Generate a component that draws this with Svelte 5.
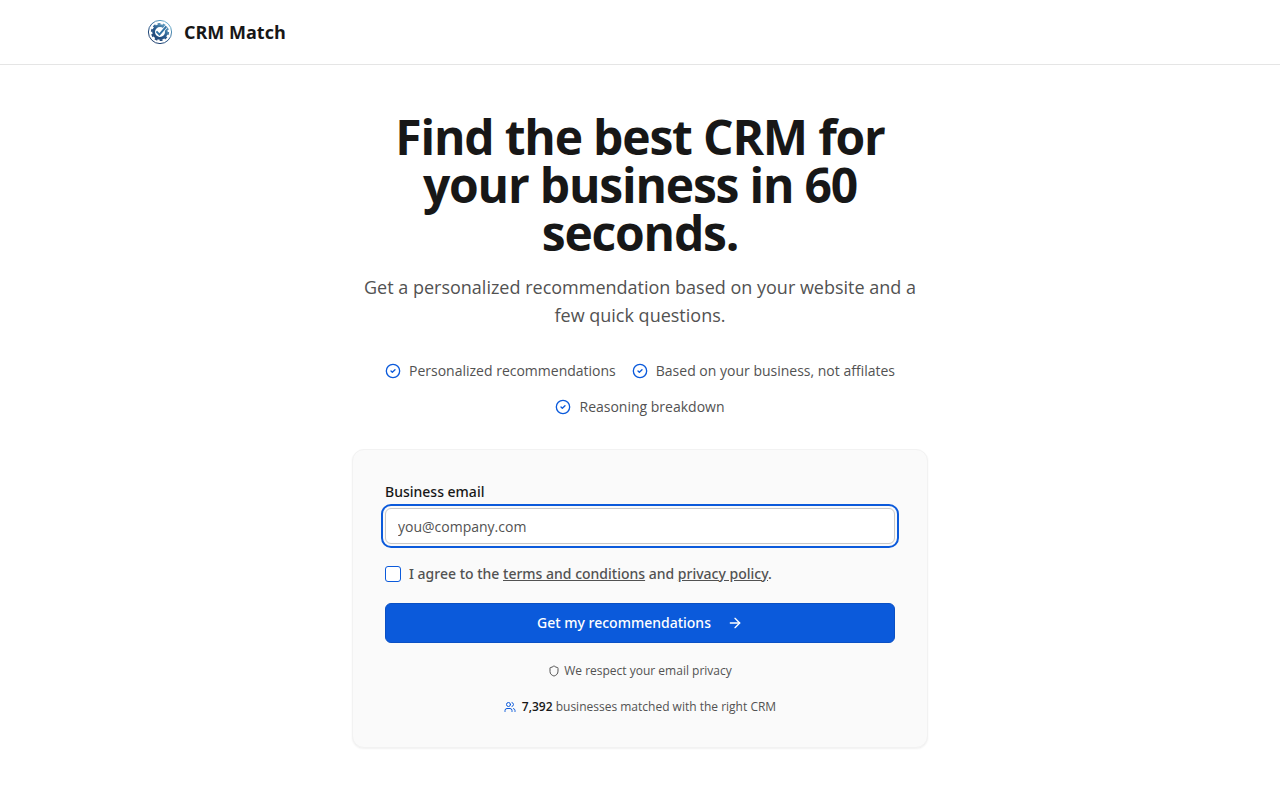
<script>
  let email = $state("")
  let agreed = $state(false)

  const benefits = [
    "Personalized recommendations",
    "Based on your business, not affilates",
    "Reasoning breakdown",
  ]

  const matched = 7392

  function submit(event) {
    event.preventDefault()
  }
</script>

<header>
  <div class="header-inner">
    <svg class="logo" viewBox="0 0 32 32" aria-hidden="true">
      <defs>
        <linearGradient id="brand" gradientUnits="userSpaceOnUse" x1="8" y1="27" x2="24" y2="6">
          <stop offset="0" stop-color="#1c3a68" />
          <stop offset="0.5" stop-color="#28598c" />
          <stop offset="1" stop-color="#72b8d4" />
        </linearGradient>
      </defs>
      <circle cx="16" cy="16" r="11.6" fill="none" stroke="url(#brand)" stroke-width="1" />
      <circle cx="16" cy="16" r="6.4" fill="none" stroke="url(#brand)" stroke-width="2.8" />
      <!-- dashed ring draws the gear teeth -->
      <circle cx="16" cy="16" r="8.2" fill="none" stroke="url(#brand)" stroke-width="1.8" stroke-dasharray="2.8 2.352" />
      <path d="M12.4 15.4l3 3.2 7-8.2" fill="none" stroke="#fff" stroke-width="3.2" />
      <path d="M12.4 15.4l3 3.2 7-8.2" fill="none" stroke="#3273a5" stroke-width="2" />
    </svg>
    <span class="brand">CRM Match</span>
  </div>
</header>

<main>
  <h1>Find the best CRM for your business in 60 seconds.</h1>
  <p class="lead">Get a personalized recommendation based on your website and a few quick questions.</p>

  <ul class="benefits">
    {#each benefits as benefit}
      <li>
        <svg class="icon check" viewBox="0 0 24 24" aria-hidden="true">
          <circle cx="12" cy="12" r="10" />
          <path d="m9 12 2 2 4-4" />
        </svg>
        {benefit}
      </li>
    {/each}
  </ul>

  <form class="card" onsubmit={submit}>
    <div class="field">
      <label for="email">Business email</label>
      <input id="email" type="email" placeholder="you@company.com" bind:value={email} />
    </div>

    <div class="consent">
      <input id="agree" type="checkbox" bind:checked={agreed} />
      <label for="agree">I agree to the <a href="#terms">terms and conditions</a> and <a href="#privacy">privacy policy</a>.</label>
    </div>

    <button type="submit">
      Get my recommendations
      <svg class="icon" viewBox="0 0 24 24" aria-hidden="true">
        <path d="M5 12h14" />
        <path d="m12 5 7 7-7 7" />
      </svg>
    </button>

    <p class="note">
      <svg class="icon small" viewBox="0 0 24 24" aria-hidden="true">
        <path d="M20 13c0 5-3.5 7.5-7.66 8.95a1 1 0 0 1-.67-.01C7.5 20.5 4 18 4 13V6a1 1 0 0 1 1-1c2 0 4.5-1.2 6.24-2.72a1.17 1.17 0 0 1 1.52 0C14.51 3.81 17 5 19 5a1 1 0 0 1 1 1z" />
      </svg>
      We respect your email privacy
    </p>

    <p class="note stats">
      <svg class="icon small" viewBox="0 0 24 24" aria-hidden="true">
        <path d="M16 21v-2a4 4 0 0 0-4-4H6a4 4 0 0 0-4 4v2" />
        <circle cx="9" cy="7" r="4" />
        <path d="M22 21v-2a4 4 0 0 0-3-3.87" />
        <path d="M16 3.13a4 4 0 0 1 0 7.75" />
      </svg>
      <span><strong>{matched.toLocaleString("en-US")}</strong> businesses matched with the right CRM</span>
    </p>
  </form>
</main>

<style>
  :global(body) {
    background: #fff;
    color: #171717;
    font-family: "Open Sans", "Noto Sans", sans-serif;
    font-size: 14px;
    line-height: 20px;
  }

  header {
    border-bottom: 1px solid #e5e5e5;
  }

  .header-inner {
    display: flex;
    align-items: center;
    gap: 8px;
    box-sizing: border-box;
    max-width: 1024px;
    height: 64px;
    margin: 0 auto;
    padding: 0 16px;
  }

  .logo {
    width: 32px;
    height: 32px;
  }

  .brand {
    font-size: 18px;
    font-weight: 700;
    line-height: 28px;
  }

  main {
    max-width: 576px;
    margin: 0 auto;
    padding: 48px 16px;
  }

  h1 {
    margin: 0;
    font-size: 48px;
    font-weight: 700;
    line-height: 48px;
    letter-spacing: -0.025em;
    text-align: center;
  }

  .lead {
    margin: 16px 0 0;
    color: #525252;
    font-size: 18px;
    line-height: 28px;
    text-align: center;
  }

  .benefits {
    display: flex;
    flex-wrap: wrap;
    justify-content: center;
    gap: 16px;
    margin: 32px 0;
    padding: 0;
    color: #525252;
    list-style: none;
  }

  .benefits li {
    display: flex;
    align-items: center;
    gap: 8px;
  }

  .icon {
    flex: none;
    width: 16px;
    height: 16px;
    fill: none;
    stroke: currentColor;
    stroke-width: 2;
    stroke-linecap: round;
    stroke-linejoin: round;
  }

  .icon.small {
    width: 12px;
    height: 12px;
  }

  .check,
  .stats .icon {
    color: #0b5adb;
  }

  .card {
    display: flex;
    flex-direction: column;
    gap: 20px;
    padding: 32px;
    border: 1px solid #f2f2f2;
    border-radius: 12px;
    background: #fafafa;
    box-shadow: 0 1px 2px rgba(0, 0, 0, 0.06);
  }

  .field {
    display: flex;
    flex-direction: column;
    gap: 6px;
  }

  .field label,
  .consent label,
  button {
    font-family: "Noto Sans", "Open Sans", sans-serif;
    font-weight: 500;
  }

  .field input {
    box-sizing: border-box;
    width: 100%;
    height: 36px;
    padding: 0 12px;
    border: 1px solid #c8c8c8;
    border-radius: 6px;
    outline: 2px solid #0b5adb;
    outline-offset: 2px;
    background: #fff;
    color: inherit;
    font: inherit;
  }

  .field input::placeholder {
    color: #525252;
    opacity: 1;
  }

  .consent {
    display: flex;
    align-items: center;
    gap: 8px;
    color: #525252;
    line-height: 19px;
  }

  .consent input {
    appearance: none;
    flex: none;
    width: 16px;
    height: 16px;
    margin: 0;
    border: 1px solid #0b5adb;
    border-radius: 3px;
    background: #fff;
  }

  .consent input:checked {
    background: #0b5adb;
  }

  .consent a {
    color: inherit;
  }

  button {
    display: flex;
    align-items: center;
    justify-content: center;
    gap: 16px;
    height: 40px;
    border: 1px solid #0a50c4;
    border-radius: 6px;
    background: #0b5adb;
    color: #fff;
    font-size: 14px;
    line-height: 20px;
    cursor: pointer;
  }

  .note {
    display: flex;
    align-items: center;
    justify-content: center;
    gap: 4px;
    margin: 0;
    color: #525252;
    font-size: 12px;
    line-height: 16px;
  }

  .stats {
    gap: 6px;
  }

  strong {
    color: #171717;
    font-weight: 600;
  }
</style>
